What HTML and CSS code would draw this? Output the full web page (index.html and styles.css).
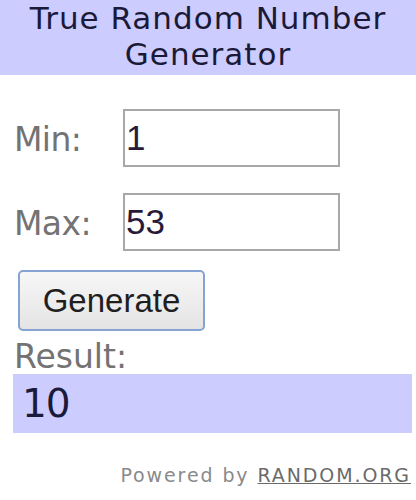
FILE: index.html
```html
<!DOCTYPE html>
<html>
<head>
<meta charset="utf-8">
<link rel="stylesheet" href="styles.css">
</head>
<body>
<div class="widget">
  <div class="header"><h1 class="title">True Random Number Generator</h1></div>
  <div class="form">
    <div class="row"><span class="label">Min:</span><div class="field">1</div></div>
    <div class="row"><span class="label">Max:</span><div class="field">53</div></div>
    <div class="btn-row"><button class="btn" type="button">Generate</button></div>
    <div class="result-label">Result:</div>
    <div class="result">10</div>
  </div>
  <div class="powered">Powered by <span class="link">RANDOM.ORG</span></div>
</div>
</body>
</html>
```
FILE: styles.css
```css
html, body {
  margin: 0;
  padding: 0;
  background: #ffffff;
}
.widget {
  width: 416px;
  height: 500px;
  font-family: "DejaVu Sans", Tahoma, sans-serif;
  overflow: hidden;
}
.header {
  height: 75px;
  background: #ccccff;
}
.title {
  margin: 0;
  font-size: 31px;
  letter-spacing: 1px;
  font-weight: normal;
  line-height: 36px;
  text-align: center;
  color: #1a1a38;
}
.form {
  padding: 34px 0 0 13px;
  display: flex;
  flex-direction: column;
}
.row {
  display: flex;
  align-items: center;
  margin-bottom: 26px;
}
.row + .row {
  margin-bottom: 19px;
}
.label {
  width: 109px;
  padding-left: 1px;
  padding-top: 3px;
  font-size: 33px;
  letter-spacing: -0.6px;
  color: #737373;
}
.field {
  box-sizing: border-box;
  width: 217px;
  height: 58px;
  border: 2px solid #a8a8a8;
  background: #fff;
  font-family: "Liberation Sans", Arial, sans-serif;
  font-size: 35px;
  line-height: 54px;
  padding-left: 1px;
  color: #2a1a3a;
}
.btn-row {
  display: flex;
  padding-left: 5px;
}
.btn {
  box-sizing: border-box;
  width: 187px;
  height: 61px;
  border: 2px solid #86a3d4;
  border-radius: 5px;
  background: linear-gradient(#f7f7f7, #e4e4e4);
  font-family: "Liberation Sans", Arial, sans-serif;
  font-size: 33px;
  color: #1f1f1f;
  padding: 0;
}
.result-label {
  margin-top: 9px;
  padding-left: 1px;
  font-size: 33px;
  line-height: 34px;
  color: #737373;
}
.result {
  box-sizing: border-box;
  width: 399px;
  height: 59px;
  background: #ccccff;
  font-size: 39px;
  letter-spacing: -1px;
  line-height: 59px;
  padding-left: 9px;
  color: #1a1a3a;
}
.powered {
  margin-top: 31px;
  padding-right: 5px;
  text-align: right;
  font-size: 19px;
  letter-spacing: 1.9px;
  color: #8a8a8a;
}
.link {
  color: #6a6a6a;
  text-decoration: underline;
}
```
